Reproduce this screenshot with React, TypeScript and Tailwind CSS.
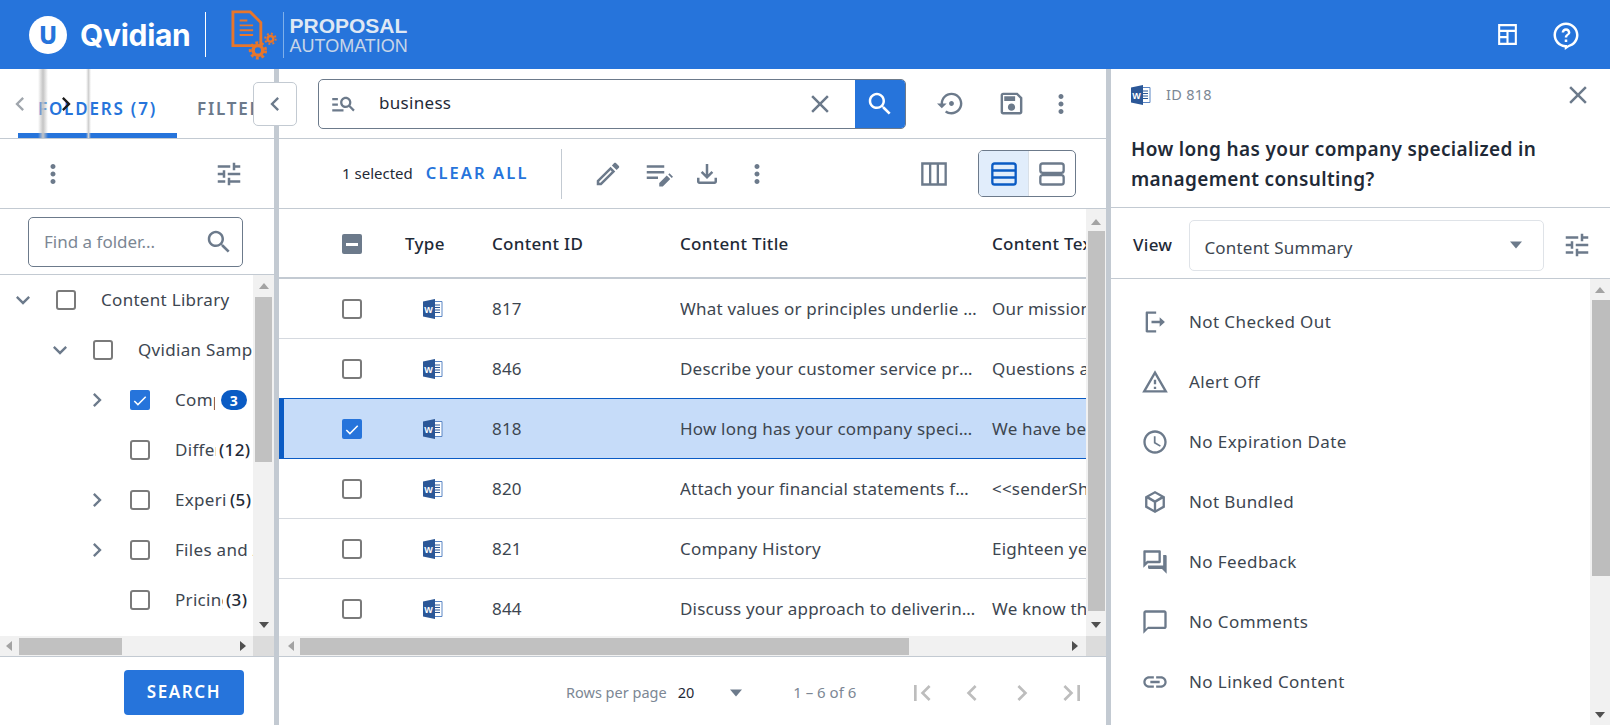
import React from "react"

const paths = {
  more: "M12 8c1.1 0 2-.9 2-2s-.9-2-2-2-2 .9-2 2 .9 2 2 2zm0 2c-1.1 0-2 .9-2 2s.9 2 2 2 2-.9 2-2-.9-2-2-2zm0 6c-1.1 0-2 .9-2 2s.9 2 2 2 2-.9 2-2-.9-2-2-2z",
  tune: "M3 17v2h6v-2H3zM3 5v2h10V5H3zm10 16v-2h8v-2h-8v-2h-2v6h2zM7 9v2H3v2h4v2h2V9H7zm14 4v-2H11v2h10zm-6-4h2V7h4V5h-4V3h-2v6z",
  search: "M15.5 14h-.79l-.28-.27C15.41 12.59 16 11.11 16 9.5 16 5.91 13.09 3 9.5 3S3 5.91 3 9.5 5.91 16 9.5 16c1.61 0 3.09-.59 4.23-1.57l.27.28v.79l5 4.99L20.49 19l-4.99-5zm-6 0C7.01 14 5 11.99 5 9.5S7.01 5 9.5 5 14 7.01 14 9.5 11.99 14 9.5 14z",
  close: "M19 6.41L17.59 5 12 10.59 6.41 5 5 6.41 10.59 12 5 17.59 6.41 19 12 13.41 17.59 19 19 17.59 13.41 12z",
  restore: "M14 12c0-1.1-.9-2-2-2s-2 .9-2 2 .9 2 2 2 2-.9 2-2zm-2-9c-4.97 0-9 4.03-9 9H0l4 4 4-4H5c0-3.87 3.13-7 7-7s7 3.13 7 7-3.13 7-7 7c-1.51 0-2.91-.49-4.06-1.3l-1.42 1.44C8.04 20.3 9.94 21 12 21c4.97 0 9-4.03 9-9s-4.03-9-9-9z",
  save: "M17 3H5c-1.11 0-2 .9-2 2v14c0 1.1.89 2 2 2h14c1.1 0 2-.9 2-2V7l-4-4zm2 16H5V5h11.17L19 7.83V19zm-7-7c-1.66 0-3 1.34-3 3s1.34 3 3 3 3-1.34 3-3-1.34-3-3-3zM6 6h9v4H6z",
  edit: "M3 17.25V21h3.75L17.81 9.94l-3.75-3.75L3 17.25zM5.92 19H5v-.92l9.06-9.06.92.92L5.92 19zM20.71 5.63l-2.34-2.34c-.2-.2-.45-.29-.71-.29s-.51.1-.7.29l-1.83 1.83 3.75 3.75 1.83-1.83c.39-.39.39-1.02 0-1.41z",
  editNote: "M3 5h14v2H3zM3 9.5h14v2H3zM3 14h9v2H3zM13 19.2V22h2.8l6-6-2.8-2.8zM20.2 12.4l2.8 2.8 1-1-2.8-2.8z",
  download: "M18 15v3H6v-3H4v3c0 1.1.9 2 2 2h12c1.1 0 2-.9 2-2v-3h-2zm-1-4l-1.41-1.41L13 12.17V4h-2v8.17L8.41 9.59 7 11l5 5 5-5z",
  left: "M15.41 7.41L14 6l-6 6 6 6 1.41-1.41L10.83 12z",
  right: "M10 6L8.59 7.41 13.17 12l-4.58 4.59L10 18l6-6z",
  down: "M16.59 8.59L12 13.17 7.41 8.59 6 10l6 6 6-6z",
  first: "M18.41 16.59L13.82 12l4.59-4.59L17 6l-6 6 6 6zM6 6h2v12H6z",
  last: "M5.59 7.41L10.18 12l-4.59 4.59L7 18l6-6-6-6zM16 6h2v12h-2z",
  manage: "M7 9H2V7h5v2zm0 3H2v2h5v-2zm13.59 7l-3.83-3.83c-.8.52-1.74.83-2.76.83-2.76 0-5-2.24-5-5s2.24-5 5-5 5 2.24 5 5c0 1.02-.31 1.96-.83 2.75L22 17.59 20.59 19zM17 11c0-1.65-1.35-3-3-3s-3 1.35-3 3 1.35 3 3 3 3-1.35 3-3zM2 19h10v-2H2v2z",
  warning: "M12 5.99L19.53 19H4.47L12 5.99M12 2L1 21h22L12 2zm1 14h-2v2h2v-2zm0-6h-2v4h2v-4z",
  clock: "M11.99 2C6.47 2 2 6.48 2 12s4.47 10 9.99 10C17.52 22 22 17.52 22 12S17.52 2 11.99 2zM12 20c-4.42 0-8-3.58-8-8s3.58-8 8-8 8 3.58 8 8-3.58 8-8 8zm.5-13H11v6l5.25 3.15.75-1.23-4.5-2.67z",
  forum: "M15 4v7H5.17L4 12.17V4h11m1-2H3c-.55 0-1 .45-1 1v14l4-4h10c.55 0 1-.45 1-1V3c0-.55-.45-1-1-1zm5 4h-2v9H6v2c0 .55.45 1 1 1h11l4 4V7c0-.55-.45-1-1-1z",
  chat: "M20 2H4c-1.1 0-2 .9-2 2v18l4-4h14c1.1 0 2-.9 2-2V4c0-1.1-.9-2-2-2zm0 14H6l-2 2V4h16v12z",
  link: "M3.9 12c0-1.71 1.39-3.1 3.1-3.1h4V7H7c-2.76 0-5 2.24-5 5s2.24 5 5 5h4v-1.9H7c-1.71 0-3.1-1.39-3.1-3.1zM8 13h8v-2H8v2zm9-6h-4v1.9h4c1.71 0 3.1 1.39 3.1 3.1s-1.39 3.1-3.1 3.1h-4V17h4c2.76 0 5-2.24 5-5s-2.24-5-5-5z",
  box: "M12 2.5l8.5 4.8v9.4L12 21.5l-8.5-4.8V7.3L12 2.5zm0 2.3L7 7.6l5 2.8 5-2.8-5-2.8zM5.5 9.3v6.2l5.5 3.1v-6.2L5.5 9.3zm13 0L13 12.4v6.2l5.5-3.1V9.3z",
  checkout: "M5 3h8v2H6v14h7v2H5c-.55 0-1-.45-1-1V4c0-.55.45-1 1-1zm11 5l4.5 4-4.5 4v-3H9v-2h7V8z",
  help: "M12 2C6.5 2 2 6.5 2 12c0 5.2 4 9.4 9 9.9V24l3.5-2.4C19 20.6 22 16.600 22 12c0-5.500-4.500-10-10-10zm1.800 17.900l-1 .7V20h-.8C7.600 20 4 16.400 4 12s3.600-8 8-8 8 3.600 8 8c0 3.700-2.500 7-6.200 7.900zM11 15.500h2v2h-2zM12 6.500c-2 0-3.500 1.500-3.500 3.500h2c0-.8.7-1.500 1.500-1.500s1.500.7 1.500 1.500c0 1.500-2.500 1.500-2.500 4h2c0-1.800 2.500-2.200 2.500-4 0-2-1.500-3.500-3.500-3.500z",
  check: "M9.5 16.2L5.8 12.500l-1.300 1.300 5 5 10-10-1.300-1.300z",
}

function Icon({ d, className }: { d: string; className?: string }) {
  return (
    <svg viewBox="0 0 24 24" fill="currentColor" className={className}>
      <path d={d} />
    </svg>
  )
}

function WordIcon({ className }: { className?: string }) {
  return (
    <svg viewBox="0 0 20 20" className={className}>
      <path d="M9 2.500h10v15H9z" fill="#fff" stroke="#5b86c4" strokeWidth="1" />
      <path d="M11.500 6h5.500M11.500 8.500h5.500M11.500 11h5.500M11.500 13.500h5.500" stroke="#2b5797" strokeWidth="1.200" />
      <path d="M0 2.500L12 0v20L0 17.500z" fill="#2b5797" />
      <text x="1.300" y="13.500" fontSize="9" fontWeight="700" fill="#fff" fontFamily="'Liberation Sans', sans-serif">W</text>
    </svg>
  )
}

function Checkbox({ state }: { state?: "on" | "mixed" }) {
  if (state === "on") {
    return (
      <span className="flex h-5 w-5 shrink-0 items-center justify-center rounded-[2px] bg-[#2674db] text-white">
        <Icon d={paths.check} className="h-5 w-5" />
      </span>
    )
  }
  if (state === "mixed") {
    return (
      <span className="flex h-5 w-5 shrink-0 items-center justify-center rounded-[2px] bg-[#6c7a8b]">
        <span className="h-[3px] w-3 bg-white" />
      </span>
    )
  }
  return <span className="block h-5 w-5 shrink-0 rounded-[3px] border-2 border-[#7a7a7a] bg-white" />
}

function Triangle({ dir, className }: { dir: "up" | "down" | "left" | "right"; className?: string }) {
  const pts = {
    up: "0,8 5,2 10,8",
    down: "0,2 10,2 5,8",
    left: "8,0 8,10 2,5",
    right: "2,0 2,10 8,5",
  }
  return (
    <svg viewBox="0 0 10 10" className={className} fill="currentColor">
      <polygon points={pts[dir]} />
    </svg>
  )
}

const treeRows = [
  { indent: "pl-[12px]", chev: "down", label: "Content Library", labelW: "w-[150px]" },
  { indent: "pl-[49px]", chev: "down", label: "Qvidian Sample Content", labelW: "w-[120px]" },
  { indent: "pl-[86px]", chev: "right", label: "Company", labelW: "w-[40px]", badge: "3" },
  { indent: "pl-[86px]", label: "Different", labelW: "w-[41px]", count: "(12)" },
  { indent: "pl-[86px]", chev: "right", label: "Experience", labelW: "w-[52px]", count: "(5)" },
  { indent: "pl-[86px]", chev: "right", label: "Files and Attachments", labelW: "w-[80px]" },
  { indent: "pl-[86px]", label: "Pricing", labelW: "w-[48px]", count: "(3)" },
]

const tableRows = [
  { id: "817", title: "What values or principles underlie your company culture?", text: "Our mission" },
  { id: "846", title: "Describe your customer service process and approach", text: "Questions and" },
  { id: "818", title: "How long has your company specialized in management", text: "We have been", selected: true },
  { id: "820", title: "Attach your financial statements for the last three years", text: "<<senderShort" },
  { id: "821", title: "Company History", text: "Eighteen years" },
  { id: "844", title: "Discuss your approach to delivering projects on time", text: "We know that" },
]

const summary = [
  { d: paths.checkout, label: "Not Checked Out" },
  { d: paths.warning, label: "Alert Off" },
  { d: paths.clock, label: "No Expiration Date" },
  { d: paths.box, label: "Not Bundled" },
  { d: paths.forum, label: "No Feedback" },
  { d: paths.chat, label: "No Comments" },
  { d: paths.link, label: "No Linked Content" },
]

function Header() {
  return (
    <header className="flex h-[69px] shrink-0 items-center bg-[#2674db] pl-[29px] pr-[29px]">
      <div className="flex h-[38px] w-[38px] items-center justify-center rounded-full bg-white">
        <span className="text-[24px] font-extrabold leading-none text-[#2674db]">U</span>
      </div>
      <span className="ml-[13px] font-['Inter',sans-serif] text-[30px] font-bold leading-none tracking-[-0.3px] text-white">Qvidian</span>
      <span className="ml-[15px] h-[45px] w-px bg-white" />
      <svg viewBox="0 0 52 52" className="ml-[25px] h-[52px] w-[50px]" fill="none">
        <path d="M2 2h18l11 11v24H2z" stroke="#e8762b" strokeWidth="3" />
        <path d="M9 16h14M9 21h14M9 26h14M9 11h8" stroke="#e8762b" strokeWidth="2" />
        <circle cx="28" cy="42" r="5" stroke="#e8762b" strokeWidth="3.500" />
        <circle cx="28" cy="42" r="8" stroke="#e8762b" strokeWidth="3" strokeDasharray="3 2.800" />
        <circle cx="41" cy="30" r="3" stroke="#e8762b" strokeWidth="2.500" />
        <circle cx="41" cy="30" r="5.500" stroke="#e8762b" strokeWidth="2" strokeDasharray="2 2.300" />
      </svg>
      <span className="ml-[2px] h-[46px] w-px bg-[#7fb0ea]" />
      <div className="ml-[5px] flex flex-col font-['Liberation_Sans',sans-serif] leading-none">
        <span className="text-[21px] font-bold text-[#dfe8f4]">PROPOSAL</span>
        <span className="mt-[1px] text-[18px] text-[#c7d5e8]">AUTOMATION</span>
      </div>
      <div className="ml-auto flex items-center gap-[31px] text-white">
        <svg viewBox="0 0 24 24" className="h-[25px] w-[25px]" fill="none" stroke="currentColor" strokeWidth="2">
          <path d="M4 3h16v18H4zM4 8.500h16M12 8.500V21M4 14.500h8" />
        </svg>
        <Icon d={paths.help} className="h-[30px] w-[30px]" />
      </div>
    </header>
  )
}

function LeftPanel() {
  return (
    <aside className="flex w-[274px] shrink-0 flex-col">
      <div className="relative h-[70px] shrink-0 overflow-hidden border-b border-[#c3cad2]">
        <div className="flex h-full pl-[18px]">
          <div className="flex w-[159px] items-center justify-center border-b-[5px] border-[#2674db] pt-[15px] text-[17px] font-semibold tracking-[1.800px] text-[#2674db]">
            FOLDERS (7)
          </div>
          <div className="flex items-center pl-[20px] pt-[10px] text-[17px] font-semibold tracking-[1.800px] whitespace-nowrap text-[#6c7a8b]">
            FILTERS
          </div>
        </div>
        <Icon d={paths.left} className="absolute top-[21px] left-[6px] h-7 w-7 text-[#a0a6ad]" />
        <Icon d={paths.right} className="absolute top-[21px] left-[52px] h-7 w-7 text-[#1a1a1a]" />
        <span className="absolute top-0 left-[38px] h-full w-[10px] bg-gradient-to-r from-transparent via-[#c4c4c4] to-transparent" />
        <span className="absolute top-0 left-[86px] h-full w-[5px] bg-gradient-to-r from-transparent via-[#d0d0d0] to-transparent" />
      </div>
      <div className="flex h-[70px] shrink-0 items-center justify-between border-b border-[#c3cad2] pl-[38px] pr-[30px] text-[#6c7a8b]">
        <Icon d={paths.more} className="h-[30px] w-[30px]" />
        <Icon d={paths.tune} className="h-[30px] w-[30px]" />
      </div>
      <div className="flex h-[66px] shrink-0 items-center border-b border-[#c3cad2] pl-[28px]">
        <div className="flex h-[50px] w-[215px] items-center justify-between rounded-[5px] border border-[#6c7a8b] pl-[15px] pr-[8px]">
          <span className="text-[17px] text-[#7c8794]">Find a folder...</span>
          <Icon d={paths.search} className="h-[30px] w-[30px] text-[#6c7a8b]" />
        </div>
      </div>
      <div className="flex min-h-0 flex-1">
        <div className="w-[253px] overflow-hidden">
          {treeRows.map((r) => (
            <div key={r.label} className={`flex h-[50px] shrink-0 items-center ${r.indent} text-[17px] tracking-[0.3px] text-[#3d4650]`}>
              <span className="block h-7 w-[24px] shrink-0 -translate-x-[1px] text-[#6c7a8b]">
                {r.chev === "down" && <Icon d={paths.down} className="-ml-[2px] h-7 w-7" />}
                {r.chev === "right" && <Icon d={paths.right} className="-ml-[2px] h-7 w-7" />}
              </span>
              <span className="ml-[20px] block"><Checkbox state={r.badge ? "on" : undefined} /></span>
              <span className={`ml-[25px] ${r.labelW} shrink-0 overflow-hidden whitespace-nowrap`}>{r.label}</span>
              {r.badge && (
                <span className="ml-[6px] flex h-[20px] w-[26px] shrink-0 items-center justify-center rounded-full bg-[#0a5bc4] text-[14px] font-bold text-white">{r.badge}</span>
              )}
              {r.count && <span className="ml-[3px] shrink-0 font-medium text-[#1f2a37]">{r.count}</span>}
            </div>
          ))}
        </div>
        <div className="flex w-[21px] shrink-0 flex-col items-center bg-[#f1f1f1]">
          <Triangle dir="up" className="mt-[6px] h-[10px] w-[10px] text-[#a3a3a3]" />
          <div className="mt-[6px] h-[165px] w-[17px] bg-[#c1c1c1]" />
          <Triangle dir="down" className="mt-auto mb-[6px] h-[10px] w-[10px] text-[#505050]" />
        </div>
      </div>
      <div className="flex h-[21px] shrink-0 items-center border-b border-[#c3cad2] bg-[#f1f1f1]">
        <Triangle dir="left" className="ml-[4px] h-[10px] w-[10px] text-[#a3a3a3]" />
        <div className="ml-[5px] h-[17px] w-[103px] bg-[#c1c1c1]" />
        <Triangle dir="right" className="ml-[116px] h-[10px] w-[10px] text-[#505050]" />
        <div className="ml-auto h-full w-[21px] bg-[#dcdcdc]" />
      </div>
      <div className="flex h-[68px] shrink-0 items-center justify-end pr-[30px] pt-[2px]">
        <button className="h-[45px] w-[120px] rounded-[4px] bg-[#2674db] text-[17px] font-semibold tracking-[1.600px] text-white">SEARCH</button>
      </div>
    </aside>
  )
}

function CenterPanel() {
  const grid = "grid grid-cols-[126px_87px_188px_312px_1fr] items-center"
  return (
    <main className="flex w-[827px] shrink-0 flex-col">
      <div className="flex h-[70px] shrink-0 items-center border-b border-[#c3cad2] pl-[39px] text-[#6c7a8b]">
        <div className="flex h-[50px] w-[588px] overflow-hidden rounded-[5px] border border-[#6c7a8b]">
          <div className="flex flex-1 items-center pl-[11px] pr-[20px]">
            <Icon d={paths.manage} className="h-[27px] w-[27px]" />
            <span className="ml-[22px] -mt-[2px] text-[17px] tracking-[0.3px] text-[#1f2a37]">business</span>
            <Icon d={paths.close} className="ml-auto h-[30px] w-[30px]" />
          </div>
          <div className="flex w-[50px] items-center justify-center bg-[#2674db] text-white">
            <Icon d={paths.search} className="h-[30px] w-[30px]" />
          </div>
        </div>
        <Icon d={paths.restore} className="ml-[31px] h-[29px] w-[29px]" />
        <Icon d={paths.save} className="ml-[31px] h-[29px] w-[29px]" />
        <Icon d={paths.more} className="ml-[20px] h-[30px] w-[30px]" />
      </div>
      <div className="flex h-[70px] shrink-0 items-center border-b border-[#c3cad2] pl-[63px] pr-[30px] text-[#6c7a8b]">
        <span className="text-[15px] text-[#1f2a37]">1 selected</span>
        <span className="ml-[13px] text-[16.500px] font-semibold tracking-[2.100px] text-[#2674db]">CLEAR ALL</span>
        <span className="ml-[32px] h-[50px] w-px bg-[#c3cad2]" />
        <Icon d={paths.edit} className="ml-[31px] h-[30px] w-[30px]" />
        <Icon d={paths.editNote} className="ml-[20px] h-[30px] w-[30px]" />
        <Icon d={paths.download} className="ml-[19px] h-[30px] w-[30px]" />
        <Icon d={paths.more} className="ml-[20px] h-[30px] w-[30px]" />
        <svg viewBox="0 0 24 24" className="ml-auto h-7 w-7" fill="none" stroke="currentColor" strokeWidth="2">
          <path d="M2 3h20v18H2zM8.700 3v18M15.300 3v18" />
        </svg>
        <div className="ml-[30px] flex h-[47px] w-[98px] overflow-hidden rounded-[5px] border border-[#6c7a8b]">
          <div className="flex w-[50px] items-center justify-center border-r border-[#d9e0e8] bg-[#e1edfb]">
            <svg viewBox="0 0 24 24" className="h-7 w-7 text-[#0a5bc4]" fill="none" stroke="currentColor" strokeWidth="2">
              <rect x="2" y="3" width="20" height="18" rx="2" />
              <path d="M2 9h20M2 15h20" />
            </svg>
          </div>
          <div className="flex flex-1 items-center justify-center">
            <svg viewBox="0 0 24 24" className="h-7 w-7" fill="none" stroke="currentColor" strokeWidth="2">
              <rect x="2" y="3" width="20" height="8" rx="2" />
              <rect x="2" y="13" width="20" height="8" rx="2" />
            </svg>
          </div>
        </div>
      </div>
      <div className="flex min-h-0 flex-1">
        <div className="w-[807px] overflow-hidden">
          <div className={`${grid} h-[70px] border-b-2 border-[#c3cad2] pt-[2px] text-[17px] font-medium tracking-[0.3px] text-[#1f2a37]`}>
            <span className="block pl-[63px]"><Checkbox state="mixed" /></span>
            <span>Type</span>
            <span>Content ID</span>
            <span>Content Title</span>
            <span className="whitespace-nowrap">Content Text</span>
          </div>
          {tableRows.map((r) => (
            <div
              key={r.id}
              className={`${grid} text-[17px] tracking-[0.2px] text-[#3d4650] ${
                r.selected
                  ? "-mt-px h-[61px] border-y border-[#0a5bc4] bg-[#c6dcf9] shadow-[inset_5px_0_0_#0a5bc4]"
                  : "h-[60px] border-b border-[#d5d9df]"
              }`}
            >
              <span className="block pl-[63px]"><Checkbox state={r.selected ? "on" : undefined} /></span>
              <span className="block pl-[18px]"><WordIcon className="h-[20px] w-[20px]" /></span>
              <span>{r.id}</span>
              <span className="truncate pr-[14px]">{r.title}</span>
              <span className="whitespace-nowrap">{r.text}</span>
            </div>
          ))}
        </div>
        <div className="flex w-[20px] shrink-0 flex-col items-center bg-[#f1f1f1]">
          <Triangle dir="up" className="mt-[8px] h-[10px] w-[10px] text-[#a3a3a3]" />
          <div className="mt-[4px] h-[380px] w-[17px] bg-[#c1c1c1]" />
          <Triangle dir="down" className="mt-auto mb-[6px] h-[10px] w-[10px] text-[#505050]" />
        </div>
      </div>
      <div className="flex h-[21px] shrink-0 items-center border-b border-[#c3cad2] bg-[#f1f1f1]">
        <Triangle dir="left" className="ml-[7px] h-[10px] w-[10px] text-[#a3a3a3]" />
        <div className="ml-[4px] h-[17px] w-[609px] bg-[#c1c1c1]" />
        <Triangle dir="right" className="ml-[161px] h-[10px] w-[10px] text-[#505050]" />
        <div className="ml-auto h-full w-[20px] bg-[#dcdcdc]" />
      </div>
      <div className="flex h-[68px] shrink-0 items-center pl-[287px] pt-[3px] text-[14.500px] text-[#7c8794]">
        <span>Rows per page</span>
        <span className="ml-[11px] text-[#1f2a37]">20</span>
        <Triangle dir="down" className="ml-[36px] h-[12px] w-[12px] text-[#6c7a8b]" />
        <span className="ml-[51px] text-[15px]">1 – 6 of 6</span>
        <div className="ml-[50px] flex items-center gap-[18px] text-[#bdbdbd]">
          <Icon d={paths.first} className="h-8 w-8" />
          <Icon d={paths.left} className="h-8 w-8" />
          <Icon d={paths.right} className="h-8 w-8" />
          <Icon d={paths.last} className="h-8 w-8" />
        </div>
      </div>
    </main>
  )
}

function RightPanel() {
  return (
    <section className="flex min-w-0 flex-1 flex-col">
      <div className="flex h-[139px] shrink-0 flex-col border-b border-[#c3cad2] px-[20px]">
        <div className="flex h-[50px] shrink-0 items-center pt-[2px]">
          <WordIcon className="h-[20px] w-[20px]" />
          <span className="ml-[15px] text-[14.500px] tracking-[0.3px] text-[#7c8794]">ID 818</span>
          <Icon d={paths.close} className="ml-auto -mr-[3px] h-[30px] w-[30px] text-[#6c7a8b]" />
        </div>
        <div className="mt-[15px] text-[19px] leading-[30px] font-semibold tracking-[0.35px] text-[#1f2a37]">
          How long has your company specialized in<br />management consulting?
        </div>
      </div>
      <div className="flex h-[71px] shrink-0 items-center border-b border-[#c3cad2] pl-[22px] pt-[4px]">
        <span className="text-[17px] font-medium tracking-[0.3px] text-[#1f2a37]">View</span>
        <div className="ml-[17px] flex h-[51px] w-[355px] items-center justify-between rounded-[5px] border border-[#dfe3e8] pl-[14px] pr-[21px]">
          <span className="pt-[5px] text-[17px] tracking-[0.2px] text-[#3d4650]">Content Summary</span>
          <Triangle dir="down" className="h-[12px] w-[12px] text-[#6c7a8b]" />
        </div>
        <Icon d={paths.tune} className="ml-[18px] h-[30px] w-[30px] text-[#6c7a8b]" />
      </div>
      <div className="flex min-h-0 flex-1">
        <div className="flex-1 pt-[13px] pl-[30px]">
          {summary.map((s) => (
            <div key={s.label} className="flex h-[60px] items-center gap-[20px] text-[17px] tracking-[0.4px] text-[#3d4650]">
              <Icon d={s.d} className="h-7 w-7 text-[#6c7a8b]" />
              <span>{s.label}</span>
            </div>
          ))}
        </div>
        <div className="flex w-[20px] shrink-0 flex-col items-center bg-[#f1f1f1]">
          <Triangle dir="up" className="mt-[6px] h-[10px] w-[10px] text-[#a3a3a3]" />
          <div className="mt-[5px] ml-[2px] h-[276px] w-[18px] bg-[#bdbdbd]" />
          <Triangle dir="down" className="mt-auto mb-[5px] h-[10px] w-[10px] text-[#505050]" />
        </div>
      </div>
    </section>
  )
}

export default function App() {
  return (
    <div className="flex h-[725px] w-[1610px] flex-col overflow-hidden bg-white font-['Noto_Sans',sans-serif]">
      <Header />
      <div className="flex min-h-0 flex-1">
        <LeftPanel />
        <div className="relative w-[5px] shrink-0 bg-[#c3cad2]">
          <button className="absolute top-[13px] -left-[21px] flex h-[44px] w-[44px] items-center justify-center rounded-[5px] border border-[#c3cad2] bg-white text-[#6c7a8b]">
            <Icon d={paths.left} className="h-7 w-7" />
          </button>
        </div>
        <CenterPanel />
        <div className="w-[5px] shrink-0 bg-[#c3cad2]" />
        <RightPanel />
      </div>
    </div>
  )
}
